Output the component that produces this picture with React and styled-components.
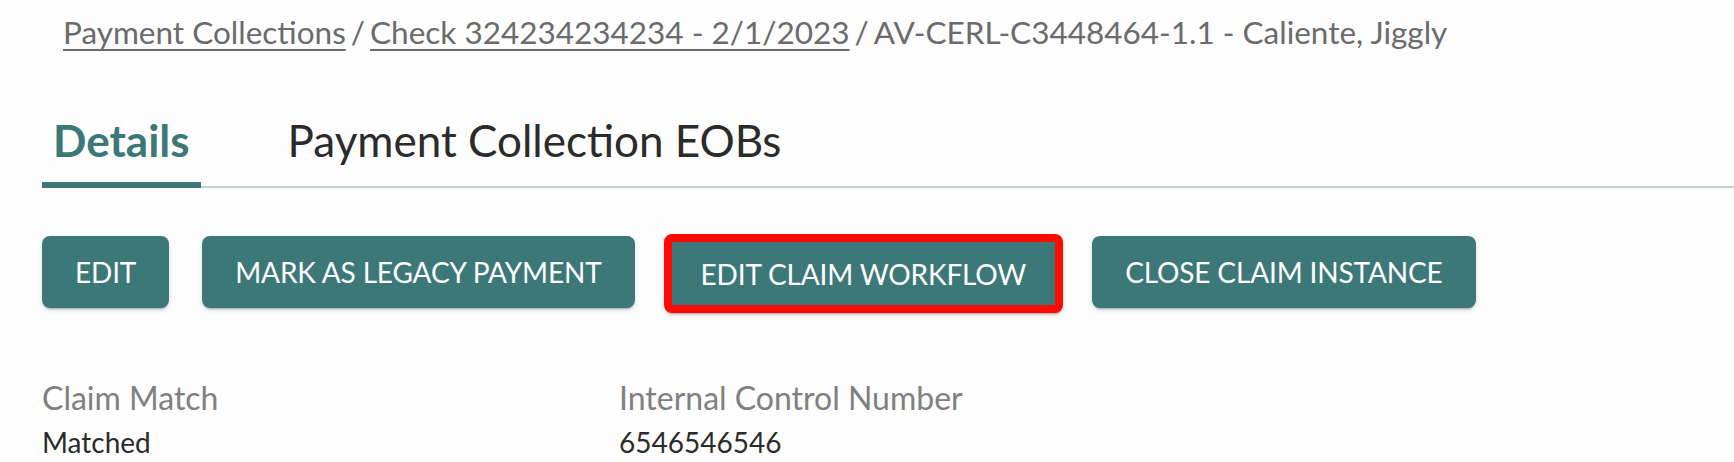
import styled, { createGlobalStyle } from "styled-components";

const GlobalStyle = createGlobalStyle`
  body {
    margin: 0;
    background: #fdfdfd;
    font-family: Lato, "Open Sans", sans-serif;
  }
`;

const crumbs = [
  { label: "Payment Collections", link: true },
  { label: "Check 324234234234 - 2/1/2023", link: true },
  { label: "AV-CERL-C3448464-1.1 - Caliente, Jiggly", link: false },
];

const actions = [
  { label: "Edit" },
  { label: "Mark as legacy payment" },
  { label: "Edit claim workflow", highlight: true },
  { label: "Close claim instance" },
];

const fields = [
  { label: "Claim Match", value: "Matched" },
  { label: "Internal Control Number", value: "6546546546" },
];

function App() {
  return (
    <Page>
      <GlobalStyle />
      <Breadcrumbs>
        {crumbs.map((c, index) => (
          <span key={index}>
            {c.link ? <CrumbLink href="#">{c.label}</CrumbLink> : c.label}
            {index < crumbs.length - 1 && <Separator>/</Separator>}
          </span>
        ))}
      </Breadcrumbs>
      <Tabs>
        <Tab active>Details</Tab>
        <Tab>Payment Collection EOBs</Tab>
      </Tabs>
      <Toolbar>
        {actions.map((a, index) => (
          <ActionButton key={index} highlight={a.highlight}>
            {a.label}
          </ActionButton>
        ))}
      </Toolbar>
      <FieldGrid>
        {fields.map((f, index) => (
          <Field key={index}>
            <FieldLabel>{f.label}</FieldLabel>
            <FieldValue>{f.value}</FieldValue>
          </Field>
        ))}
      </FieldGrid>
    </Page>
  );
}

export default App;

const Page = styled.div`
  display: flex;
  flex-direction: column;
  padding: 0 0 0 42px;
  height: 462px;
  overflow: hidden;
`;
const Breadcrumbs = styled.div`
  display: flex;
  align-items: center;
  height: 40px;
  margin: 13px 0 0 21px;
  font-size: 31.5px;
  color: #6b6b6b;
  white-space: nowrap;
`;
const CrumbLink = styled.a`
  color: #6b6b6b;
  text-decoration: underline;
  text-decoration-thickness: 2px;
  text-underline-offset: 5px;
`;
const Separator = styled.span`
  margin: 0 5px;
`;
const Tabs = styled.div`
  display: flex;
  align-items: flex-end;
  gap: 76px;
  height: 96px;
  margin-top: 47px;
  border-bottom: 2px solid #c9d0d0;
`;
const Tab = styled.div`
  display: flex;
  align-items: center;
  height: 100%;
  padding: 0 11px 2px;
  margin-bottom: -2px;
  font-size: 44px;
  font-weight: ${(props) => (props.active ? 700 : 400)};
  color: ${(props) => (props.active ? "#3d7879" : "#2b2b2b")};
  border-bottom: 6px solid
    ${(props) => (props.active ? "#3d7879" : "transparent")};
  box-sizing: border-box;
`;
const Toolbar = styled.div`
  display: flex;
  align-items: flex-start;
  gap: 33px;
  margin-top: 48px;
`;
const ActionButton = styled.button`
  display: flex;
  justify-content: center;
  align-items: center;
  height: ${(props) => (props.highlight ? "79px" : "72px")};
  margin: ${(props) => (props.highlight ? "-2px -4px 0" : "0")};
  padding: 0 ${(props) => (props.highlight ? "29px" : "33px")};
  font-family: Lato, "Open Sans", sans-serif;
  font-size: 28px;
  letter-spacing: -0.15px;
  text-transform: uppercase;
  color: #ffffff;
  background-color: #3d7879;
  border: ${(props) => (props.highlight ? "8px solid #ff0a00" : "none")};
  border-radius: 8px;
  box-shadow: 0 3px 2px -2px rgba(0, 0, 0, 0.25), 0 2px 5px rgba(0, 0, 0, 0.14);
  box-sizing: border-box;
`;
const FieldGrid = styled.div`
  display: grid;
  grid-template-columns: 577px 577px;
  margin-top: 65px;
`;
const Field = styled.div`
  display: flex;
  flex-direction: column;
`;
const FieldLabel = styled.div`
  font-size: 32px;
  line-height: 40px;
  color: #808080;
`;
const FieldValue = styled.div`
  font-size: 28px;
  line-height: 40px;
  margin-top: 4px;
  color: #2b2b2b;
`;
